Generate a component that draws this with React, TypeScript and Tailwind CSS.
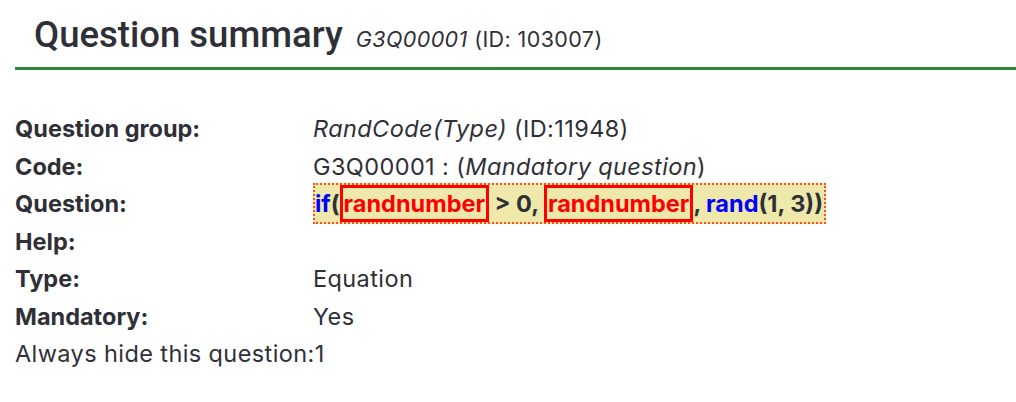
import React from "react";

const rows: { label: string; value: React.ReactNode }[] = [
  {
    label: "Question group:",
    value: (
      <span>
        <i>RandCode(Type)</i>
        {" (ID:11948)"}
      </span>
    ),
  },
  {
    label: "Code:",
    value: (
      <span>
        {"G3Q00001 : ("}
        <i>Mandatory question</i>
        {")"}
      </span>
    ),
  },
  {
    label: "Question:",
    value: (
      <span className="inline-flex items-center h-[41px] -my-[2px] bg-[#eee8aa] border-2 border-dotted border-[#ff4d1a] font-bold pr-[1px] tracking-normal">
        <span className="text-[#0000ff]">if</span>
        <span>(</span>
        <span className="inline-flex items-center h-[37px] border-[3px] border-[#ff0000] text-[#ff0000] px-[1px]">randnumber</span>
        <span className="whitespace-pre"> &gt; 0, </span>
        <span className="inline-flex items-center h-[37px] border-[3px] border-[#ff0000] text-[#ff0000] px-[1px]">randnumber</span>
        <span className="whitespace-pre">, </span>
        <span className="text-[#0000ff]">rand</span>
        <span>(1, 3))</span>
      </span>
    ),
  },
  { label: "Help:", value: "" },
  { label: "Type:", value: "Equation" },
  { label: "Mandatory:", value: "Yes" },
];

export default function App() {
  return (
    <div
      className="w-[1016px] h-[402px] bg-white text-[#2f3037] overflow-hidden"
      style={{ fontFamily: "Inter, 'Liberation Sans', sans-serif" }}
    >
      <div className="ml-[15px] border-b-[3px] border-[#328637] pt-[8px] h-[70px]">
        <div className="pl-[19px] flex items-baseline gap-[13px]">
          <span
            className="text-[36.5px] font-medium"
            style={{ fontFamily: "Roboto, 'Liberation Sans', sans-serif" }}
          >
            Question summary
          </span>
          <span className="text-[21.5px] tracking-[0.4px]">
            <i>G3Q00001</i> (ID: 103007)
          </span>
        </div>
      </div>
      <div className="pl-[15px] pt-[40px] text-[23.5px]">
        <div className="flex flex-col">
          {rows.map((r) => (
            <div key={r.label} className="flex items-center h-[37.5px]">
              <div className="w-[298px] font-bold">{r.label}</div>
              <div className="flex items-center tracking-[0.4px]">{r.value}</div>
            </div>
          ))}
          <div className="h-[37.5px] flex items-center tracking-[0.4px]">Always hide this question:1</div>
        </div>
      </div>
    </div>
  );
}
